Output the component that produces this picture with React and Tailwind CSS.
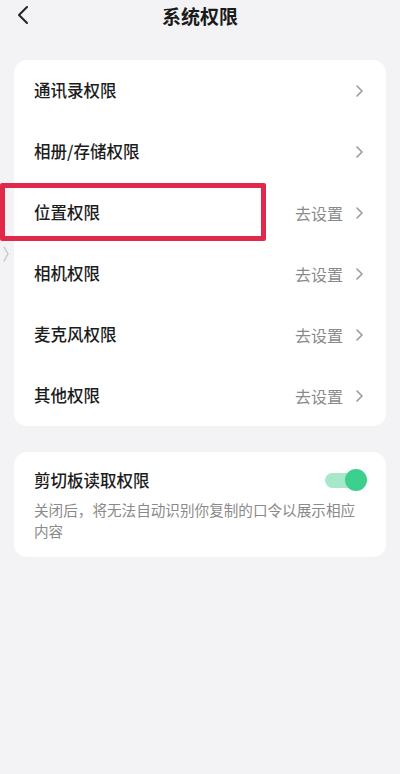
import React from "react";

const rows = [
  { label: "通讯录权限", action: false },
  { label: "相册/存储权限", action: false },
  { label: "位置权限", action: true },
  { label: "相机权限", action: true },
  { label: "麦克风权限", action: true },
  { label: "其他权限", action: true },
];

function Chevron() {
  return (
    <svg width="9" height="14" viewBox="0 0 9 14" fill="none">
      <path d="M2 2l5 5-5 5" stroke="#9a9a9a" strokeWidth="1.6" strokeLinecap="round" strokeLinejoin="round" />
    </svg>
  );
}

export default function App() {
  return (
    <div
      className="relative w-[400px] h-[774px] bg-[#f3f3f5] overflow-hidden"
      style={{ fontFamily: '"Noto Sans CJK SC", "Noto Sans", sans-serif' }}
    >
      {/* header */}
      <div className="relative h-[30px] flex items-center justify-center">
        <button className="absolute left-[15px] top-[5px]">
          <svg width="16" height="20" viewBox="0 0 16 20" fill="none">
            <path d="M12 2L4 10l8 8" stroke="#222" strokeWidth="2" strokeLinecap="round" strokeLinejoin="round" />
          </svg>
        </button>
        <h1 className="text-[19px] font-bold text-[#1a1a1a] leading-none">系统权限</h1>
      </div>

      <main className="px-[14px] pt-[30px]">
        {/* permission list */}
        <section className="bg-white rounded-[13px] overflow-hidden">
          {rows.map((r) => (
            <div key={r.label} className="h-[61px] flex items-center justify-between pl-[20px] pr-[22px]">
              <span className="text-[16.5px] font-medium text-[#1c1c1c]">{r.label}</span>
              <div className="flex items-center gap-[12px]">
                {r.action && <span className="text-[16px] text-[#8a8a8a]">去设置</span>}
                <Chevron />
              </div>
            </div>
          ))}
        </section>

        {/* clipboard */}
        <section className="mt-[26px] bg-white rounded-[13px] px-[20px] pt-[16px] pb-[16px]">
          <div className="flex items-center justify-between">
            <span className="text-[16.5px] font-medium text-[#1c1c1c]">剪切板读取权限</span>
            <div className="relative w-[42px] h-[24px] flex items-center mr-[-1px]">
              <div className="h-[15px] w-[34px] rounded-full bg-[#a6e8c9]" />
              <div className="absolute right-0 top-[1px] w-[22px] h-[22px] rounded-full bg-[#3ccf8d]" />
            </div>
          </div>
          <p className="mt-[6px] text-[14.6px] leading-[21px] text-[#8a8a8a]">
            关闭后，将无法自动识别你复制的口令以展示相应内容
          </p>
        </section>
      </main>

      {/* highlight annotation */}
      <div className="absolute left-0 top-[183px] w-[266px] h-[58px] border-[5px] border-[#e0294a] rounded-[2px]" />

      {/* edge handle */}
      <svg className="absolute left-[2px] top-[245px]" width="8" height="18" viewBox="0 0 8 18" fill="none">
        <path d="M2 2l4 7-4 7" stroke="#c8c8c8" strokeWidth="1.4" strokeLinecap="round" />
      </svg>
    </div>
  );
}
